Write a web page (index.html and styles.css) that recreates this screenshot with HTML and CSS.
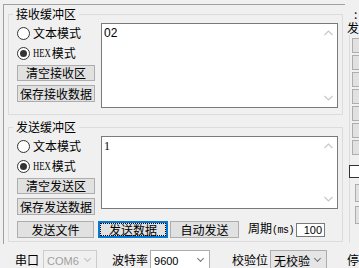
FILE: index.html
```html
<!DOCTYPE html>
<html lang="zh-CN">
  <head>
    <meta charset="UTF-8" />
    <title>串口调试助手</title>
    <link rel="stylesheet" href="styles.css">
  </head>

  <body>
    <div class="app">
      <div class="main">
        <!-- 接收区 -->
        <fieldset class="group">
          <legend>接收缓冲区</legend>
          <div class="group-body">
            <div class="ctrl">
              <label class="radio"><span class="dot"></span>文本模式</label>
              <label class="radio"><span class="dot on"></span><span class="hex">HEX</span>模式</label>
              <button class="btn">清空接收区</button>
              <button class="btn">保存接收数据</button>
            </div>
            <div class="edit recv-edit">
              <div class="edit-text">02</div>
              <div class="scroll">
                <svg width="9" height="6" viewBox="0 0 9 6"><polyline points="0.5,5 4.5,1 8.5,5" /></svg>
                <svg width="9" height="6" viewBox="0 0 9 6"><polyline points="0.5,1 4.5,5 8.5,1" /></svg>
              </div>
            </div>
          </div>
        </fieldset>

        <!-- 发送区 -->
        <fieldset class="group send">
          <legend>发送缓冲区</legend>
          <div class="group-body">
            <div class="ctrl">
              <label class="radio"><span class="dot"></span>文本模式</label>
              <label class="radio"><span class="dot on"></span><span class="hex">HEX</span>模式</label>
              <button class="btn">清空发送区</button>
              <button class="btn">保存发送数据</button>
            </div>
            <div class="edit send-edit">
              <div class="edit-text serif">1</div>
              <div class="scroll">
                <svg width="9" height="6" viewBox="0 0 9 6"><polyline points="0.5,5 4.5,1 8.5,5" /></svg>
                <svg width="9" height="6" viewBox="0 0 9 6"><polyline points="0.5,1 4.5,5 8.5,1" /></svg>
              </div>
            </div>
          </div>
          <div class="send-row">
            <button class="btn file">发送文件</button>
            <button class="btn default"><span>发送数据</span></button>
            <button class="btn auto">自动发送</button>
            <span class="period">周期<span class="ms">(ms)</span></span>
            <span class="num">100</span>
          </div>
        </fieldset>
      </div>

      <!-- 右侧多字符串 -->
      <div class="side">
        <div class="side-title"><span class="t1">:</span><span class="t2">发</span></div>
        <div class="side-list">
          <button class="sbtn"></button>
          <button class="sbtn"></button>
          <button class="sbtn"></button>
          <button class="sbtn"></button>
          <button class="sbtn"></button>
          <button class="sbtn"></button>
          <button class="sbtn"></button>
          <span class="check"></span>
          <button class="sbtn tall"></button>
          <button class="sbtn tall"></button>
        </div>
      </div>
    </div>

    <!-- 串口参数 -->
    <div class="status">
      <span class="lbl">串口</span>
      <span class="combo port disabled">COM6<i></i></span>
      <span class="lbl baud-lbl">波特率</span>
      <span class="combo baud">9600<i></i></span>
      <span class="lbl check-lbl">校验位</span>
      <span class="combo parity">无校验<i></i></span>
      <span class="lbl stop-lbl">停</span>
    </div>
  </body>
</html>
```

FILE: styles.css
```css
* {
  margin: 0;
  padding: 0;
  box-sizing: border-box;
}

html,
body {
  overflow: hidden;
  width: 359px;
  height: 268px;
}

body {
  background-color: #f0f0f0;
  color: #000;
  font-family: "Noto Sans CJK SC", "Noto Sans", sans-serif;
  font-size: 12px;
  line-height: 14px;
}

button {
  font: inherit;
  color: inherit;
}

.app {
  display: flex;
  height: 244px;
}

/* 左侧主面板 */
.main {
  width: 342px;
  flex-shrink: 0;
  margin: 4px 0 0 3px;
  border-top: 1px solid #a0a0a0;
  border-left: 1px solid #a0a0a0;
}

.group {
  margin: 2px 2px 0 4px;
  padding: 2px 4px 6px 8px;
  border: 1px solid #dcdcdc;
}

.group legend {
  margin-left: -4px;
  padding: 0 3px;
  line-height: 14px;
}

.group.send {
  margin-top: 5px;
  padding-bottom: 3px;
}

.group-body {
  display: flex;
  gap: 6px;
}

.ctrl {
  display: flex;
  flex-direction: column;
  width: 78px;
}

.radio {
  display: flex;
  align-items: center;
  height: 20px;
}

.dot {
  position: relative;
  width: 13px;
  height: 13px;
  margin: 0 3px 0 0;
  border: 1px solid #333;
  border-radius: 50%;
  background-color: #fff;
}

.dot.on::after {
  content: "";
  position: absolute;
  left: 2px;
  top: 2px;
  width: 7px;
  height: 7px;
  border-radius: 50%;
  background-color: #333;
}

/* 窄衬线的 HEX */
.hex {
  display: inline-block;
  font-family: "Liberation Serif", serif;
  font-size: 12px;
  transform: scaleX(0.72);
  transform-origin: left center;
  margin-right: -6px;
}

.btn {
  height: 16px;
  border: 1px solid #adadad;
  background-color: #e1e1e1;
  line-height: 14px;
  text-align: center;
  white-space: nowrap;
}

.ctrl .btn:first-of-type {
  margin-top: 2px;
}

.ctrl .btn + .btn {
  margin-top: 4px;
  height: 17px;
}

/* 文本框 */
.edit {
  display: flex;
  width: 237px;
  border: 1px solid #7a7a7a;
  background-color: #fff;
}

.recv-edit {
  height: 85px;
}

.send-edit {
  height: 73px;
}

.edit-text {
  flex: 1;
  padding: 2px 2px;
  font-family: "Liberation Sans", sans-serif;
}

.edit-text.serif {
  font-family: "Liberation Serif", serif;
}

.scroll {
  display: flex;
  flex-direction: column;
  justify-content: space-between;
  align-items: center;
  width: 17px;
  padding: 6px 0;
}

.scroll svg polyline {
  fill: none;
  stroke: #c8c8c8;
  stroke-width: 1.2;
}

/* 发送按钮行 */
.send-row {
  display: flex;
  align-items: center;
  margin-top: 6px;
  height: 17px;
}

.send-row .btn {
  height: 17px;
}

.btn.file {
  width: 77px;
}

.btn.default {
  width: 70px;
  margin-left: 4px;
  border-color: #0078d7;
  box-shadow: inset 0 0 0 1px #0078d7;
  padding: 2px;
  line-height: 11px;
}

.btn.default span {
  display: block;
  height: 11px;
  outline: 1px dotted #000;
}

.btn.auto {
  width: 69px;
  margin-left: 2px;
}

.period {
  margin-left: 9px;
}

.ms {
  font-family: "Liberation Mono", monospace;
  font-size: 10px;
  letter-spacing: -0.5px;
}

.num {
  width: 29px;
  height: 14px;
  margin-left: 2px;
  border: 1px solid #7a7a7a;
  background-color: #fff;
  font-family: "Liberation Sans", sans-serif;
  font-size: 11px;
  line-height: 12px;
  text-align: right;
  padding-right: 2px;
}

/* 右侧面板 */
.side {
  width: 10px;
  flex-shrink: 0;
  margin-left: 4px;
  position: relative;
}

.side-title {
  position: absolute;
  left: -2px;
  top: 8px;
  display: flex;
  flex-direction: column;
  font-size: 12px;
  background-color: #f0f0f0;
  white-space: nowrap;
}

.side-title .t1 {
  height: 12px;
  line-height: 12px;
  padding-left: 7px;
  overflow: hidden;
}

.side-title .t2 {
  margin-top: 1px;
  line-height: 14px;
}

.side-list {
  display: flex;
  flex-direction: column;
  align-items: flex-start;
  margin-top: 13px;
  height: 230px;
  padding: 24px 0 0 2px;
  border-left: 1px solid #dcdcdc;
  border-top: 1px solid #dcdcdc;
}

.sbtn {
  width: 7px;
  height: 15px;
  margin-bottom: 2px;
  border: 1px solid #adadad;
  border-right: 0;
  background-color: #e1e1e1;
}

.check {
  width: 11px;
  height: 13px;
  margin: 8px 0 6px -3px;
  border: 1px solid #333;
  border-right: 0;
  background-color: #fff;
}

.sbtn.tall {
  width: 4px;
  height: 18px;
  margin: 0 0 4px 3px;
}

/* 底部参数行 */
.status {
  display: flex;
  align-items: flex-start;
  padding: 6px 0 0 15px;
}

.lbl {
  margin-top: 3px;
  white-space: nowrap;
}

.combo {
  position: relative;
  height: 22px;
  margin-left: 4px;
  padding: 4px 0 0 3px;
  border: 1px solid #adadad;
  background-color: #fff;
  font-family: "Liberation Sans", sans-serif;
  font-size: 11px;
  line-height: 13px;
}

.combo i {
  position: absolute;
  right: 6px;
  top: 5px;
  width: 5px;
  height: 5px;
  border-right: 1px solid #707070;
  border-bottom: 1px solid #707070;
  transform: rotate(45deg);
}

.combo.disabled {
  color: #a0a0a0;
  border-color: #cccccc;
  background-color: #f0f0f0;
}

.combo.disabled i {
  border-color: #bfbfbf;
}

.combo.port {
  width: 54px;
}

.baud-lbl {
  margin-left: 15px;
}

.combo.baud {
  width: 60px;
  margin-left: 2px;
}

.check-lbl {
  margin-left: 22px;
}

.combo.parity {
  width: 57px;
  margin-left: 2px;
  font-family: "Noto Sans CJK SC", sans-serif;
  font-size: 12px;
  padding-top: 3px;
  background-color: #e5e5e5;
}

.stop-lbl {
  margin-left: 20px;
}
```
